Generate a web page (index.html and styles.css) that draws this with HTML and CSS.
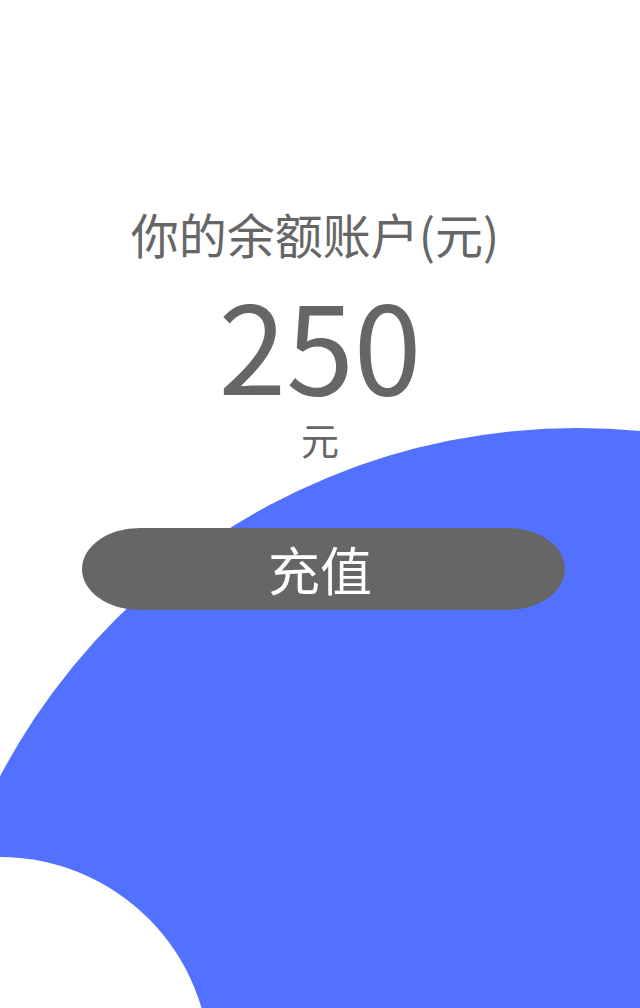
FILE: index.html
```html
<!DOCTYPE html>
<html lang="zh-CN">
<head>
<meta charset="utf-8">
<title>余额</title>
<link rel="stylesheet" href="styles.css">
</head>
<body>
<div class="page">
  <div class="bg">
    <div class="circle-blue"></div>
    <div class="circle-white"></div>
  </div>
  <main class="content">
    <div class="title">你的余额账户(元)</div>
    <div class="amount">250</div>
    <div class="unit">元</div>
    <div class="btn">充值</div>
  </main>
</div>
</body>
</html>
```

FILE: styles.css
```css
html, body {
  margin: 0;
  padding: 0;
  background: #ffffff;
}
body {
  font-family: "Noto Sans CJK SC", "Noto Sans", sans-serif;
  color: #666666;
}
.page {
  position: relative;
  width: 640px;
  height: 1008px;
  overflow: hidden;
}
.bg {
  position: absolute;
  inset: 0;
  z-index: 0;
}
.circle-blue {
  position: absolute;
  left: -75px;
  top: 428px;
  width: 1304px;
  height: 1304px;
  border-radius: 50%;
  background: #5271ff;
}
.circle-white {
  position: absolute;
  left: -210px;
  top: 857px;
  width: 420px;
  height: 420px;
  border-radius: 50%;
  background: #ffffff;
}
.content {
  position: relative;
  z-index: 1;
  display: flex;
  flex-direction: column;
  align-items: center;
  padding-top: 203px;
}
.title {
  font-size: 48px;
  line-height: 60px;
  margin-right: 10px;
}
.amount {
  font-size: 122px;
  line-height: 122px;
  margin-top: 18px;
}
.unit {
  font-size: 38px;
  line-height: 40px;
  margin-top: 16px;
}
.btn {
  align-self: flex-start;
  margin-left: 82px;
  margin-top: 69px;
  width: 483px;
  height: 82px;
  border-radius: 12% / 50%;
  background: #666666;
  color: #ffffff;
  font-size: 52px;
  line-height: 82px;
  display: flex;
  justify-content: center;
  padding-right: 7px;
  box-sizing: border-box;
}
```
